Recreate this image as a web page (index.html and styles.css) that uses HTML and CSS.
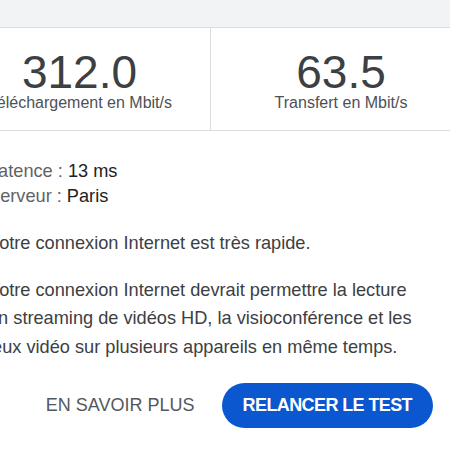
FILE: index.html
```html
<!DOCTYPE html>
<html lang="fr">
<head>
<meta charset="utf-8">
<link rel="stylesheet" href="styles.css">
</head>
<body>
<div class="topband"></div>
<div class="card">
  <div class="stats">
    <div class="stat stat-first">
      <div class="num">312.0</div>
      <div class="unit">Téléchargement en Mbit/s</div>
    </div>
    <div class="stat">
      <div class="num">63.5</div>
      <div class="unit">Transfert en Mbit/s</div>
    </div>
  </div>
  <div class="body">
    <div class="details">
      <div class="row"><span class="lbl">Latence :</span> <span class="val">13 ms</span></div>
      <div class="row"><span class="lbl">Serveur :</span> <span class="val">Paris</span></div>
    </div>
    <p class="para p1">Votre connexion Internet est très rapide.</p>
    <p class="para p2">Votre connexion Internet devrait permettre la lecture en streaming de vidéos HD, la visioconférence et les jeux vidéo sur plusieurs appareils en même temps.</p>
    <div class="actions">
      <span class="link">EN SAVOIR PLUS</span>
      <span class="btn">RELANCER LE TEST</span>
    </div>
  </div>
</div>
</body>
</html>
```
FILE: styles.css
```css
html, body {
  margin: 0;
  padding: 0;
  background: #ffffff;
  overflow: hidden;
}
body {
  font-family: "Liberation Sans", Arial, sans-serif;
  width: 450px;
  height: 450px;
}
.topband {
  height: 27px;
  background: #f1f3f4;
  border-bottom: 1px solid #dadce0;
}
.card {
  margin-left: -51px;
  width: 522px;
}
.stats {
  display: grid;
  grid-template-columns: 262px 260px;
  border-bottom: 1px solid #dadce0;
}
.stat {
  padding: 20px 0 20px;
  text-align: center;
}
.stat-first {
  border-right: 1px solid #dadce0;
}
.num {
  font-size: 46px;
  line-height: 48px;
  color: #3c4043;
}
.unit {
  font-size: 16px;
  line-height: 14px;
  color: #4d5156;
}
.body {
  padding: 28px 38px 0 39px;
}
.details {
  font-size: 18.2px;
  line-height: 25px;
}
.lbl {
  color: #5f6368;
}
.val {
  color: #202124;
}
.para {
  margin: 0;
  margin-right: 6px;
  font-size: 18.2px;
  line-height: 28.5px;
  color: #3c4043;
}
.p1 {
  margin-top: 20px;
}
.p2 {
  margin-top: 18px;
}
.actions {
  margin-top: 22px;
  display: flex;
  justify-content: flex-end;
  align-items: center;
  gap: 27px;
}
.link {
  font-size: 18px;
  color: #54585d;
}
.btn {
  display: block;
  background: #0b57d0;
  color: #ffffff;
  font-size: 18px;
  font-weight: bold;
  letter-spacing: -0.6px;
  line-height: 45px;
  height: 45px;
  padding: 0 21px;
  border-radius: 23px;
}
```
